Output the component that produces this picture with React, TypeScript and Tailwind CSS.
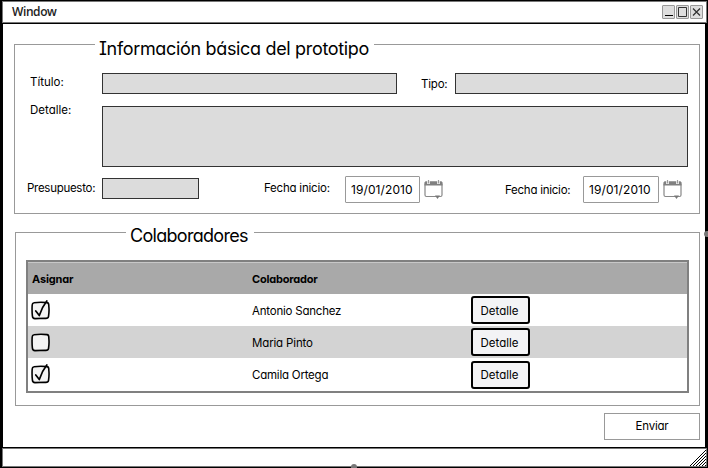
import React from "react";

type BoxProps = { className?: string; children?: React.ReactNode };

function Label({ className = "", children }: BoxProps) {
  return <span className={`block shrink-0 whitespace-nowrap text-[11.5px] leading-4 ${className}`}>{children}</span>;
}

function Legend({ lead, className, children }: { lead: string; className: string; children: string }) {
  return (
    <div className="flex h-7 items-start">
      <div className={`h-px shrink-0 bg-[#999] ${lead}`} />
      <h2 className={`shrink-0 whitespace-nowrap pl-[4px] text-[18px] leading-6 ${className}`}>{children}</h2>
      <div className="h-px flex-1 bg-[#999]" />
    </div>
  );
}

function Field({ className }: { className: string }) {
  return <div className={`shrink-0 border border-[#333] bg-[#dcdcdc] ${className}`} />;
}

function Calendar() {
  return (
    <svg className="mt-1 ml-1 h-[19px] w-[19px] shrink-0" viewBox="0 0 19 19" fill="none">
      <path d="M1 3.5v11.5q0 1.5 1.5 1.5h14q1.5 0 1.5-1.5v-11.5" stroke="#888" strokeWidth="1.2" />
      <path d="M1.5 1.3h16l1 1.2v3h-18v-3z" fill="#808080" />
      <path d="M4.5 0v4M14.5 0v4" stroke="#fff" strokeWidth="2.6" />
      <path d="M4.5 0v3.5M14.5 0v3.5" stroke="#999" strokeWidth="1.2" />
      <path d="M11 15.5h5l-2.5 3.5z" fill="#777" />
    </svg>
  );
}

function DateInput({ className = "" }: BoxProps) {
  return (
    <div className="flex">
      <div className={`flex h-[27px] items-center rounded-[1px] border border-[#999] pl-[5px] text-[12px] tracking-[0.1px] ${className}`}>
        19/01/2010
      </div>
      <Calendar />
    </div>
  );
}

function Checkbox({ checked }: { checked: boolean }) {
  return (
    <svg className="-mt-px h-5 w-[19px]" viewBox="0 0 19 20" fill="none" stroke="#000" strokeLinecap="round" strokeLinejoin="round">
      <path d="M3 2.8Q9 1.8 16 2.6Q18 2.8 17.8 6Q18.4 11 17.5 16.6Q17.2 18.6 14 18.3L4 18.6Q1.5 18.6 1.4 16Q.8 10 1.2 5Q1.2 3 3 2.8Z" fill="#f3f3f3" strokeWidth="1.6" />
      {checked && <path d="M4.8 11L8.3 15.6Q11 7 15.8 1" strokeWidth="1.7" />}
    </svg>
  );
}

const people = [
  { name: "Antonio Sanchez", assigned: true, row: "h-8", text: "tracking-[-0.22px]" },
  { name: "Maria Pinto", assigned: false, row: "h-8 bg-[#d3d3d3]", text: "tracking-[-0.15px]" },
  { name: "Camila Ortega", assigned: true, row: "h-[33px]", text: "tracking-[-0.22px]" },
];

function WindowButton({ children }: BoxProps) {
  return (
    <div className="h-[14px] w-[13px] rounded-[1px] border border-[#999] bg-[#dedede]">
      <svg className="h-3 w-[11px]" viewBox="0 0 11 12" fill="none" stroke="#333">{children}</svg>
    </div>
  );
}

export default function App() {
  return (
    <div className="relative flex h-[468px] w-[708px] flex-col overflow-hidden bg-black font-['Comic_Sans_MS','Inter',sans-serif] text-black [font-feature-settings:'cv11','cv08']">
      <header className="mt-px ml-[2px] flex h-[22px] w-[705px] shrink-0 items-center justify-between border border-[#777] bg-white pr-[3px] pl-[9px]">
        <span className="font-['Open_Sans',sans-serif] text-[12px] leading-4 font-semibold tracking-[-0.4px] text-[#222] [font-feature-settings:normal]">Window</span>
        <div className="flex gap-[1px]">
          <WindowButton><path d="M2 9.5h8" stroke="#000" /></WindowButton>
          <WindowButton><path d="M1.5 1.5h8v9h-8z" /></WindowButton>
          <WindowButton><path d="M2 2.5l7 7M9 2.5l-7 7" strokeWidth="1.3" /></WindowButton>
        </div>
      </header>

      <main className="mt-px ml-[3px] h-[423px] w-[702px] shrink-0 bg-white pt-5 pl-[11px]">
        <section className="h-[170px] w-[686px] border-x border-b border-[#999]">
          <Legend lead="w-[80px]" className="-mt-[7px] w-[279px] tracking-[-0.33px]">Información básica del prototipo</Legend>
          <div className="mt-px flex">
            <Label className="ml-[15px] mt-[1px] w-[72px]">Título:</Label>
            <Field className="h-[21px] w-[295px]" />
            <Label className="ml-[24px] mt-[3px] w-[34px] tracking-[-0.2px]">Tipo:</Label>
            <Field className="h-[21px] w-[233px]" />
          </div>
          <div className="mt-3 flex">
            <Label className="ml-[15px] -mt-[4px] w-[72px]">Detalle:</Label>
            <Field className="h-[61px] w-[586px]" />
          </div>
          <div className="mt-[9px] flex">
            <Label className="ml-[12px] mt-[4px] w-[75px] tracking-[-0.28px]">Presupuesto:</Label>
            <Field className="mt-[2px] h-[21px] w-[97px]" />
            <Label className="ml-[65px] mt-[4px] w-[81px] tracking-[-0.22px]">Fecha inicio:</Label>
            <DateInput className="w-[75px]" />
            <Label className="ml-[62px] mt-[6px] w-[78px] tracking-[-0.25px]">Fecha inicio:</Label>
            <DateInput className="w-[76px]" />
          </div>
        </section>

        <section className="mt-[18px] ml-px h-[174px] w-[685px] border-x border-b border-[#999]">
          <Legend lead="w-[110px]" className="-mt-2 w-[128px] tracking-[-0.7px]">Colaboradores</Legend>
          <div className="ml-[10px] h-[133px] w-[663px] border-2 border-[#808080]">
            <div className="flex h-8 items-center border-t border-[#c8c8c8] bg-[#a9a9a9] pt-px text-[11px] font-bold">
              <span className="w-[220px] pl-[4px] tracking-[-0.15px]">Asignar</span>
              <span className="pl-[4px] tracking-[-0.2px]">Colaborador</span>
            </div>
            {people.map((p) => (
              <div key={p.name} className={`flex items-center text-[11.5px] ${p.row}`}>
                <div className="w-[220px] pl-[3px]"><Checkbox checked={p.assigned} /></div>
                <span className={`w-[223px] pt-[3px] pl-[4px] ${p.text}`}>{p.name}</span>
                <button className="h-7 w-[59px] rounded-[3px] border-2 border-black bg-[#f3f3f5] pt-[3px] pr-[2px] text-[11.5px]">Detalle</button>
              </div>
            ))}
          </div>
        </section>

        <button className="mt-[7px] ml-[590px] flex h-[27px] w-[96px] items-center justify-center border border-[#999] text-[11.5px] tracking-[-0.2px]">Enviar</button>
      </main>

      <footer className="mt-px ml-[2px] flex h-[19px] w-[705px] shrink-0 items-end justify-end border border-[#777] bg-white">
        <svg className="h-4 w-4" viewBox="0 0 16 16" stroke="#000" strokeWidth="1">
          <path d="M0 16L16 0M3 16L16 3M6 16L16 6M9 16L16 9M12 16L16 12M15 16L16 15" />
        </svg>
      </footer>
      <div className="absolute top-[231px] left-[704px] h-[6px] w-[6px] rounded-full bg-[#777]" />
      <div className="absolute top-[464px] left-[351px] h-[6px] w-[6px] rounded-full bg-[#777]" />
    </div>
  );
}
